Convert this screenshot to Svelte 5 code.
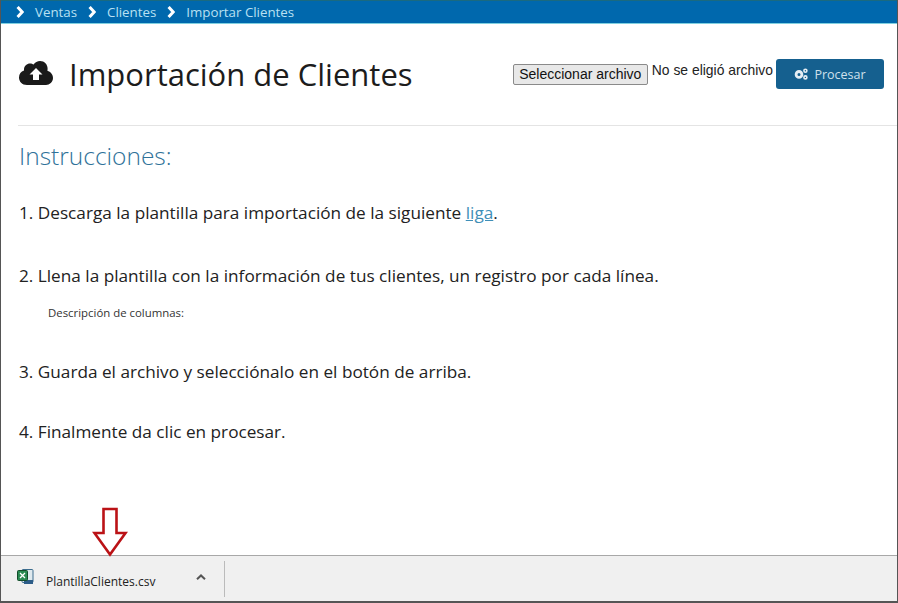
<script>
    const crumbs = ["Ventas", "Clientes", "Importar Clientes"];
</script>

<div class="window">
    <nav class="crumbs">
        {#each crumbs as crumb}
            <svg class="chevron" viewBox="0 0 8 12" width="8" height="12">
                <path d="M1.6 1 L6.2 6 L1.6 11" fill="none" stroke="#fff" stroke-width="3" />
            </svg>
            <span class="crumb">{crumb}</span>
        {/each}
    </nav>

    <main>
        <header class="head">
            <svg class="cloud" viewBox="0 0 34 24" width="34" height="24">
                <path d="M8 24 C3 24 0 20.5 0 16.5 C0 13 2 10.5 5 9.5 C5 9 5 8.5 5 8.5 C5 5 8 2.5 11 2.5 C12.5 2.5 13.6 3 14.6 3.6 C16 1.4 18.5 0 21 0 C25.5 0 28.6 3.4 28.6 7.6 C28.6 8.5 28.5 9.4 28.4 9.8 C31.6 10.8 34 13.5 34 17 C34 21 30.5 24 27 24 Z" fill="#1a1a1a" />
                <path d="M17 7 L23.5 13.6 L20 13.6 L20 19 L14 19 L14 13.6 L10.5 13.6 Z" fill="#fff" />
            </svg>
            <h1>Importación de Clientes</h1>
            <div class="actions">
                <button class="file">Seleccionar archivo</button>
                <span class="nofile">No se eligió archivo</span>
                <button class="process">
                    <svg viewBox="0 0 14 12" width="14" height="12">
                        <circle cx="5" cy="6.4" r="2.9" fill="none" stroke="#e6eef4" stroke-width="2.8" />
                        <circle cx="11.4" cy="2.8" r="1.5" fill="none" stroke="#e6eef4" stroke-width="1.6" />
                        <circle cx="11.4" cy="9.4" r="1.5" fill="none" stroke="#e6eef4" stroke-width="1.6" />
                    </svg>
                    Procesar
                </button>
            </div>
        </header>

        <section class="body">
            <h2>Instrucciones:</h2>
            <p class="one">1. Descarga la plantilla para importación de la siguiente <a href="#liga">liga</a>.</p>
            <p class="two">2. Llena la plantilla con la información de tus clientes, un registro por cada línea.</p>
            <p class="note">Descripción de columnas:</p>
            <p class="three">3. Guarda el archivo y selecciónalo en el botón de arriba.</p>
            <p class="four">4. Finalmente da clic en procesar.</p>
        </section>

        <svg class="arrow" viewBox="0 0 36 52" width="36" height="52">
            <path d="M11.5 2 H24.5 V26 H33.5 L18 47.5 L2.5 26 H11.5 Z" fill="#fff" stroke="#bb1216" stroke-width="2.6" />
        </svg>
    </main>

    <footer class="downloads">
        <svg class="sheet" viewBox="0 0 17 16" width="17" height="16">
            <rect x="5" y="0.5" width="11" height="13" rx="1" fill="#dfe9ee" stroke="#3d6d8e" />
            <rect x="7" y="11" width="9" height="4" fill="#2c5c88" />
            <rect x="0.5" y="1.5" width="10" height="10" rx="1" fill="#2a8a52" stroke="#134d2b" />
            <path d="M3 4 L8 9 M8 4 L3 9" stroke="#fff" stroke-width="1.3" />
        </svg>
        <span class="fname">PlantillaClientes.csv</span>
        <svg class="caret" viewBox="0 0 10 6" width="10" height="6">
            <path d="M1 5.2 L5 1.4 L9 5.2" fill="none" stroke="#555" stroke-width="2" />
        </svg>
        <div class="sep"></div>
    </footer>
</div>

<style>
    :global(body) {
        margin: 0;
        background: #fff;
    }

    .window {
        width: 898px;
        height: 603px;
        box-sizing: border-box;
        display: flex;
        flex-direction: column;
        border-left: 1px solid #555;
        border-right: 1px solid #555;
        border-bottom: 2px solid #555;
        font-family: "Open Sans", sans-serif;
        color: #222;
        overflow: hidden;
    }

    .crumbs {
        height: 24px;
        flex: none;
        box-sizing: border-box;
        display: flex;
        align-items: center;
        padding-left: 15px;
        background: #0068ad;
        border-top: 1px solid #1a6a80;
        border-bottom: 1px solid #7fd0e0;
        font-size: 13.3px;
        color: #b9e0f2;
    }

    .chevron {
        margin-right: 11px;
    }

    .crumb {
        margin-right: 11px;
    }

    main {
        flex: 1;
        position: relative;
    }

    .head {
        height: 102px;
        box-sizing: border-box;
        margin-left: 17px;
        display: flex;
        align-items: center;
        border-bottom: 1px solid #e4e4e4;
    }

    .cloud {
        margin: 0 16px 3px 1px;
    }

    h1 {
        margin: 0 0 2px;
        font-size: 31px;
        font-weight: 400;
        color: #1c1c1c;
    }

    .actions {
        margin-left: auto;
        margin-right: 13px;
        display: flex;
        align-items: flex-start;
        font-family: "Liberation Sans", sans-serif;
        font-size: 13.9px;
    }

    .file {
        width: 135px;
        height: 21px;
        margin-top: 4px;
        padding: 0 0 2px;
        font: inherit;
        font-size: 14px;
        color: #111;
        background: #e8e8e8;
        border: 1px solid #8a8a8a;
        border-radius: 2px;
    }

    .nofile {
        margin: 2px 3px 0 4px;
        color: #222;
    }

    .process {
        width: 108px;
        height: 30px;
        margin-top: -1px;
        padding: 0;
        display: flex;
        align-items: center;
        justify-content: center;
        gap: 6px;
        background: #15608f;
        border: none;
        border-radius: 3px;
        color: #cfe0ec;
        font-family: "Open Sans", sans-serif;
        font-size: 12.5px;
    }

    .body {
        padding: 14px 0 0 18px;
    }

    h2 {
        margin: 0;
        font-size: 24.5px;
        font-weight: 300;
        line-height: 32px;
        color: #2f7299;
    }

    p {
        margin: 0;
        font-size: 17.2px;
        line-height: 24px;
        color: #222;
    }

    .one {
        margin-top: 29px;
    }

    .two {
        margin-top: 39px;
    }

    .note {
        margin: 17px 0 0 29px;
        font-size: 11.4px;
        line-height: 16px;
        color: #333;
    }

    .three {
        margin-top: 39px;
    }

    .four {
        margin-top: 36px;
    }

    a {
        color: #3f8fb8;
    }

    .arrow {
        position: absolute;
        left: 91px;
        bottom: -4px;
    }

    .downloads {
        height: 46px;
        flex: none;
        box-sizing: border-box;
        display: flex;
        align-items: center;
        padding-left: 16px;
        background: #f0f0f0;
        border-top: 1px solid #a8a8a8;
        font-size: 12px;
        color: #222;
    }

    .sheet {
        margin: 0 12px 4px 0;
    }

    .fname {
        width: 149px;
        margin-top: 6px;
    }

    .caret {
        margin: 0 0 3px 1px;
    }

    .sep {
        width: 1px;
        height: 36px;
        margin-left: 18px;
        background: #bbb;
    }
</style>
